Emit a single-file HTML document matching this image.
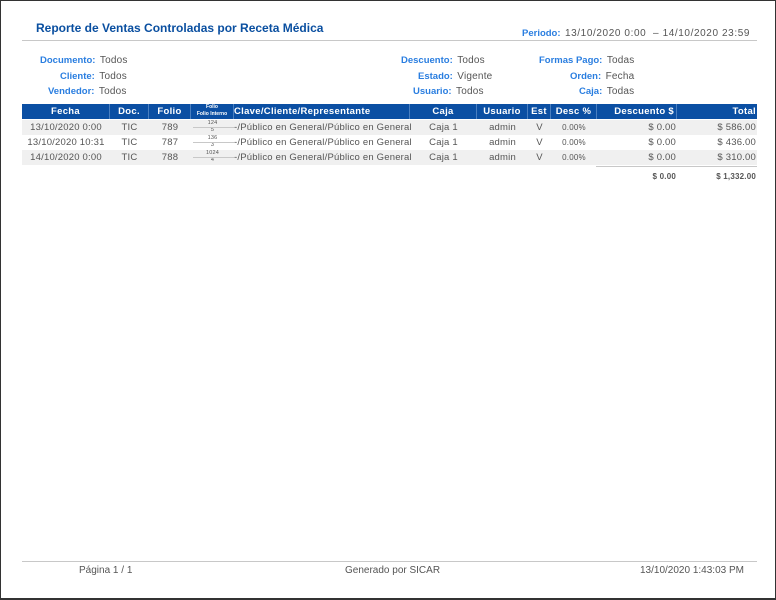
<!DOCTYPE html>
<html><head><meta charset="utf-8"><style>
*{margin:0;padding:0;box-sizing:border-box}
body{width:776px;height:600px;background:#fff;position:relative;overflow:hidden;font-family:"Liberation Sans",sans-serif;color:#555}
.frame{position:absolute;left:0;top:0;width:776px;height:600px;border:1px solid #333;border-bottom-width:2px}
.a{position:absolute;white-space:nowrap}
.t{font-size:12px;font-weight:bold;color:#0a4fa0}
.lab{font-size:9.5px;font-weight:bold;color:#2a7ee0}
.val{font-size:10px;color:#555;letter-spacing:0.2px}
.hr{position:absolute;height:1px;background:#c8c8c8}
.hd{position:absolute;top:104px;height:15px;background:#0b4fa3;color:#fff;font-size:9.5px;font-weight:bold;text-align:center;line-height:15px;border-right:1px solid #4a7fc0;letter-spacing:0.3px}
.row{position:absolute;left:22px;width:735px;height:15px}
.c{position:absolute;font-size:9.5px;color:#555;line-height:15px;white-space:nowrap;letter-spacing:0.2px}
.sm{font-size:8px}
</style></head><body>
<div class="frame"></div>
<div class="a t" style="left:36px;top:21px">Reporte de Ventas Controladas por Receta Médica</div>
<div class="a" style="left:522px;top:23px"><span class="lab">Periodo:</span> <span class="val" style="letter-spacing:0.6px">13/10/2020 0:00 &nbsp;– 14/10/2020 23:59</span></div>
<div class="hr" style="left:22px;top:40px;width:735px"></div>

<div class="a" style="left:40px;top:50px"><span class="lab">Documento:</span> <span class="val">Todos</span></div>
<div class="a" style="left:60px;top:66px"><span class="lab">Cliente:</span> <span class="val">Todos</span></div>
<div class="a" style="left:48px;top:81px"><span class="lab">Vendedor:</span> <span class="val">Todos</span></div>
<div class="a" style="left:401px;top:50px"><span class="lab">Descuento:</span> <span class="val">Todos</span></div>
<div class="a" style="left:418px;top:66px"><span class="lab">Estado:</span> <span class="val">Vigente</span></div>
<div class="a" style="left:413px;top:81px"><span class="lab">Usuario:</span> <span class="val">Todos</span></div>
<div class="a" style="left:539px;top:50px"><span class="lab">Formas Pago:</span> <span class="val">Todas</span></div>
<div class="a" style="left:570px;top:66px"><span class="lab">Orden:</span> <span class="val">Fecha</span></div>
<div class="a" style="left:579px;top:81px"><span class="lab">Caja:</span> <span class="val">Todas</span></div>

<div class="hd" style="left:22px;width:88px">Fecha</div>
<div class="hd" style="left:110px;width:39px">Doc.</div>
<div class="hd" style="left:149px;width:42px">Folio</div>
<div class="hd" style="left:191px;width:43px;font-size:5px;line-height:7px;letter-spacing:0">Folio<br>Folio Interno</div>
<div class="hd" style="left:234px;width:176px;text-align:left">Clave/Cliente/Representante</div>
<div class="hd" style="left:410px;width:67px">Caja</div>
<div class="hd" style="left:477px;width:51px">Usuario</div>
<div class="hd" style="left:528px;width:23px">Est</div>
<div class="hd" style="left:551px;width:46px">Desc %</div>
<div class="hd" style="left:597px;width:80px;text-align:right;padding-right:2px">Descuento $</div>
<div class="hd" style="left:677px;width:80px;text-align:right;padding-right:1px;border-right:none">Total</div>

<div class="row" style="top:120px;background:#f0f0f0"></div>
<div class="row" style="top:150px;background:#f0f0f0"></div>

<div class="c" style="left:22px;width:88px;text-align:center;top:120px">13/10/2020 0:00</div>
<div class="c" style="left:22px;width:88px;text-align:center;top:135px">13/10/2020 10:31</div>
<div class="c" style="left:22px;width:88px;text-align:center;top:150px">14/10/2020 0:00</div>
<div class="c" style="left:110px;width:39px;text-align:center;top:120px">TIC</div>
<div class="c" style="left:110px;width:39px;text-align:center;top:135px">TIC</div>
<div class="c" style="left:110px;width:39px;text-align:center;top:150px">TIC</div>
<div class="c" style="left:149px;width:42px;text-align:center;top:120px">789</div>
<div class="c" style="left:149px;width:42px;text-align:center;top:135px">787</div>
<div class="c" style="left:149px;width:42px;text-align:center;top:150px">788</div>
<div class="c" style="left:191px;width:43px;text-align:center;top:120px;font-size:5.5px;line-height:7px">124<br>5</div>
<div class="c" style="left:191px;width:43px;text-align:center;top:135px;font-size:5.5px;line-height:7px">136<br>3</div>
<div class="c" style="left:191px;width:43px;text-align:center;top:150px;font-size:5.5px;line-height:7px">1024<br>4</div>
<div class="hr" style="left:193px;top:127px;width:41px"></div>
<div class="hr" style="left:193px;top:142px;width:41px"></div>
<div class="hr" style="left:193px;top:157px;width:41px"></div>
<div class="c" style="left:234px;top:120px">-/Público en General/Público en General</div>
<div class="c" style="left:234px;top:135px">-/Público en General/Público en General</div>
<div class="c" style="left:234px;top:150px">-/Público en General/Público en General</div>
<div class="c" style="left:410px;width:67px;text-align:center;top:120px">Caja 1</div>
<div class="c" style="left:410px;width:67px;text-align:center;top:135px">Caja 1</div>
<div class="c" style="left:410px;width:67px;text-align:center;top:150px">Caja 1</div>
<div class="c" style="left:477px;width:51px;text-align:center;top:120px">admin</div>
<div class="c" style="left:477px;width:51px;text-align:center;top:135px">admin</div>
<div class="c" style="left:477px;width:51px;text-align:center;top:150px">admin</div>
<div class="c" style="left:528px;width:23px;text-align:center;top:120px">V</div>
<div class="c" style="left:528px;width:23px;text-align:center;top:135px">V</div>
<div class="c" style="left:528px;width:23px;text-align:center;top:150px">V</div>
<div class="c sm" style="left:551px;width:46px;text-align:center;top:120px">0.00%</div>
<div class="c sm" style="left:551px;width:46px;text-align:center;top:135px">0.00%</div>
<div class="c sm" style="left:551px;width:46px;text-align:center;top:150px">0.00%</div>
<div class="c" style="left:597px;width:79px;text-align:right;top:120px">$ 0.00</div>
<div class="c" style="left:597px;width:79px;text-align:right;top:135px">$ 0.00</div>
<div class="c" style="left:597px;width:79px;text-align:right;top:150px">$ 0.00</div>
<div class="c" style="left:677px;width:79px;text-align:right;top:120px">$ 586.00</div>
<div class="c" style="left:677px;width:79px;text-align:right;top:135px">$ 436.00</div>
<div class="c" style="left:677px;width:79px;text-align:right;top:150px">$ 310.00</div>

<div class="hr" style="left:596px;top:166px;width:161px"></div>
<div class="c" style="left:597px;width:79px;text-align:right;top:169px;font-size:8px;font-weight:bold">$ 0.00</div>
<div class="c" style="left:677px;width:79px;text-align:right;top:169px;font-size:8px;font-weight:bold">$ 1,332.00</div>

<div class="hr" style="left:22px;top:561px;width:735px"></div>
<div class="a val" style="left:79px;top:565px;font-size:10px;letter-spacing:0">Página 1 / 1</div>
<div class="a val" style="left:345px;top:565px;font-size:10px;letter-spacing:0">Generado por SICAR</div>
<div class="a val" style="left:640px;top:565px;font-size:10px;letter-spacing:0">13/10/2020 1:43:03 PM</div>
</body></html>
